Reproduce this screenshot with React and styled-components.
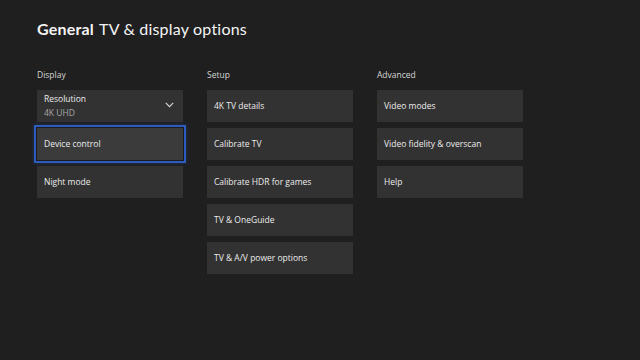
import React from "react";
import styled, { createGlobalStyle } from "styled-components";

const Global = createGlobalStyle`
  html, body {
    margin: 0;
    padding: 0;
    background: #1f1f1f;
  }
  body {
    font-family: "Open Sans", "Noto Sans", sans-serif;
    color: #f2f2f2;
  }
`;

const Screen = styled.div`
  width: 640px;
  height: 360px;
  box-sizing: border-box;
  padding: 17px 0 0 37px;
  background: #1f1f1f;
  overflow: hidden;
`;

const Title = styled.h1`
  margin: 0;
  font-family: "Lato", "Open Sans", sans-serif;
  font-size: 16px;
  font-weight: 400;
  line-height: 24px;
  letter-spacing: 0.2px;
  color: #f4f4f4;

  b {
    font-weight: 700;
    margin-right: 5px;
  }
`;

const Columns = styled.div`
  display: grid;
  grid-template-columns: repeat(3, 146px);
  column-gap: 24px;
  margin-top: 28px;
`;

const Column = styled.section`
  display: flex;
  flex-direction: column;
  gap: 6px;
`;

const Label = styled.div`
  font-size: 8.5px;
  line-height: 12px;
  color: #d6d6d6;
  margin-bottom: 3px;
`;

const Tile = styled.div`
  position: relative;
  height: 32px;
  box-sizing: border-box;
  padding: 0 7px;
  display: flex;
  flex-direction: column;
  justify-content: center;
  background: ${(p) => (p.$focused ? "#3b3b3b" : "#323232")};
  box-shadow: ${(p) =>
    p.$focused ? "0 0 0 1px #1c1c1c, 0 0 0 3px #2c5cc0, 0 0 4px 3px rgba(44,92,192,0.35)" : "none"};
  font-size: 8.5px;
  line-height: 12px;
  color: #ececec;
`;

const Sub = styled.span`
  color: #a8a8a8;
  margin-top: 2px;
`;

const Chevron = styled.svg`
  position: absolute;
  right: 9px;
  top: 12px;
  width: 9px;
  height: 6px;
`;

const columns = [
  {
    label: "Display",
    items: [
      { title: "Resolution", sub: "4K UHD", dropdown: true },
      { title: "Device control", focused: true },
      { title: "Night mode" },
    ],
  },
  {
    label: "Setup",
    items: [
      { title: "4K TV details" },
      { title: "Calibrate TV" },
      { title: "Calibrate HDR for games" },
      { title: "TV & OneGuide" },
      { title: "TV & A/V power options" },
    ],
  },
  {
    label: "Advanced",
    items: [
      { title: "Video modes" },
      { title: "Video fidelity & overscan" },
      { title: "Help" },
    ],
  },
];

export default function App() {
  return (
    <>
      <Global />
      <Screen>
        <Title>
          <b>General</b>TV &amp; display options
        </Title>
        <Columns>
          {columns.map((col) => (
            <Column key={col.label}>
              <Label>{col.label}</Label>
              {col.items.map((it) => (
                <Tile key={it.title} $focused={it.focused}>
                  <span>{it.title}</span>
                  {it.sub && <Sub>{it.sub}</Sub>}
                  {it.dropdown && (
                    <Chevron viewBox="0 0 9 6">
                      <path d="M0.8 0.8 L4.5 4.6 L8.2 0.8" fill="none" stroke="#d8d8d8" strokeWidth="1.1" />
                    </Chevron>
                  )}
                </Tile>
              ))}
            </Column>
          ))}
        </Columns>
      </Screen>
    </>
  );
}
